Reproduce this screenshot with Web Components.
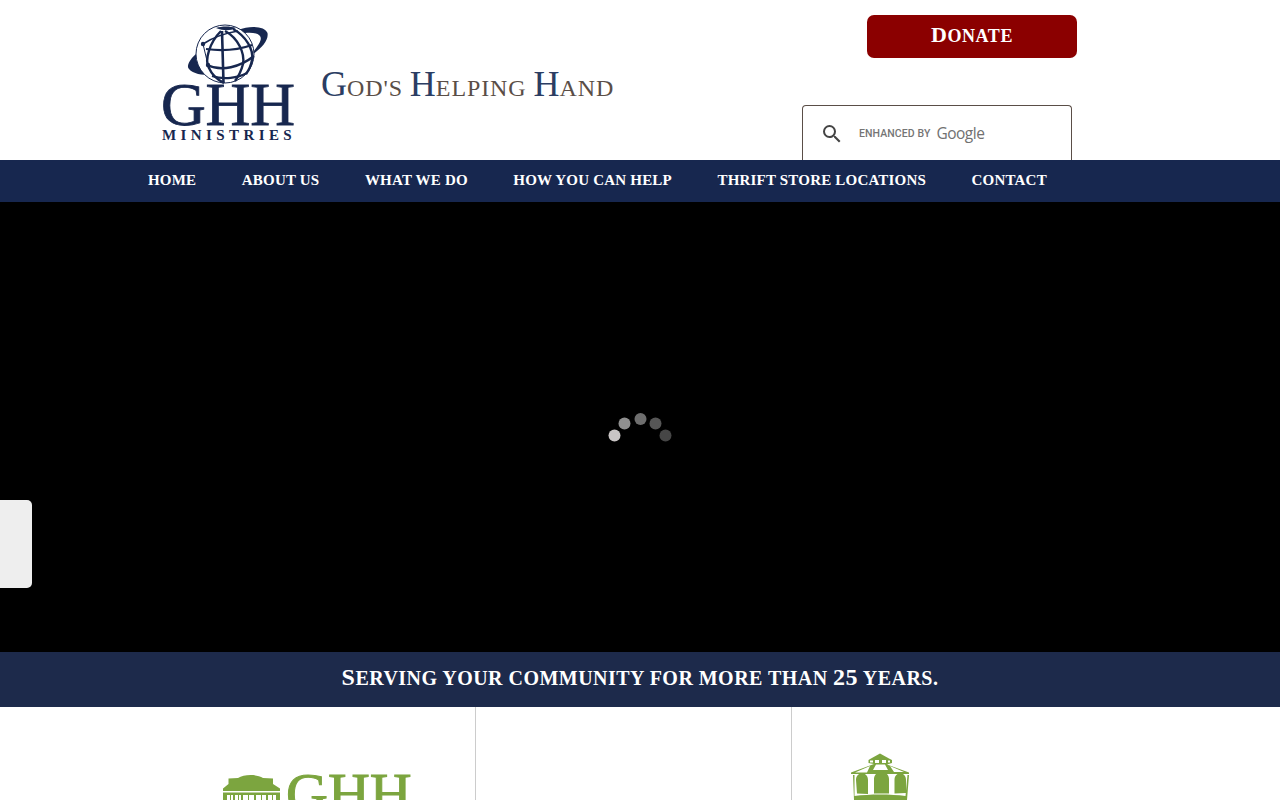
<!DOCTYPE html>
<html lang="en">
<head>
<meta charset="utf-8">
<title>GHH Ministries</title>
<style>
html,body{margin:0;padding:0;height:800px;overflow:hidden;background:#fff;font-family:"Liberation Serif",serif}
</style>
</head>
<body>
<ghh-header></ghh-header>
<ghh-nav>
  <ghh-link>Home</ghh-link><ghh-link>About Us</ghh-link><ghh-link>What We Do</ghh-link><ghh-link>How You Can Help</ghh-link><ghh-link>Thrift Store Locations</ghh-link><ghh-link>Contact</ghh-link>
</ghh-nav>
<ghh-hero></ghh-hero>
<ghh-banner></ghh-banner>
<ghh-columns></ghh-columns>
<ghh-side-tab></ghh-side-tab>
<script>
function def(name, css, html){
  customElements.define(name, class extends HTMLElement{
    constructor(){super();this.attachShadow({mode:'open'}).innerHTML='<style>'+css+'</style>'+html;}
  });
}
def('ghh-logo',`
:host{display:flex;flex-direction:column;width:136px;color:#17274f;font-family:"Liberation Serif",serif}
svg{display:block;width:85px;height:60px;margin-left:24px}
.g{font-size:62px;line-height:40px;height:42px;-webkit-text-stroke:.8px #17274f;white-space:nowrap;letter-spacing:-.2px}
.m{font-size:15px;font-weight:700;line-height:16px;letter-spacing:4.4px;margin-top:1px;white-space:nowrap;padding-left:1px}
`,`<svg viewBox="185 24 85 60" aria-hidden="true">
<g fill="#17274f"><path d="M238 30C250 25 265 26 267.500 33C269 41 260 50 250 56C257 47 263 40 260 36C257 32 247 32 241 34Z"/>
<path d="M196 54C190 59 186 66 189 69C193 74 202 75 211 75C202 71 196 66 196 54Z"/></g>
<circle cx="225" cy="54" r="29" fill="#fff" stroke="#17274f" stroke-width="1"/>
<g fill="none" stroke="#17274f" stroke-width="2.400">
<path d="M222 31L223.500 83" stroke-width="2.600"/>
<path d="M221 31C210 42 204 60 209 68C212 75 218 80 224 83"/>
<path d="M225 31C238 38 245 53 243 64C241 72 238 77 235 81"/>
<path d="M233 29C246 36 254 50 252 60C251 66 249 70 246 74"/>
<path d="M206 49C220 51 238 50 252 45" stroke-width="2.200"/>
<path d="M207 65C222 72 240 67 254 56" stroke-width="2.400"/>
<path d="M212 76C224 80 238 78 247 73" stroke-width="2.200"/>
<path d="M203 44C212 38 226 33 238 31" stroke-width="1.600"/>
<path d="M203 44L208 65" stroke-width="1"/>
</g>
<path d="M216 28C224 31 230 31 236 28C230 26 222 26 216 28Z" fill="#17274f"/>
<circle cx="203" cy="44" r="2.200" fill="#17274f"/><circle cx="208" cy="65" r="2.200" fill="#17274f"/>
</svg>
<div class="g">GHH</div><div class="m">MINISTRIES</div>`);
def('ghh-title',`
:host{display:block;font-family:"Liberation Serif",serif;font-size:24px;line-height:36px;color:#5a4e47;letter-spacing:.9px;white-space:nowrap}
span{color:#2b3d63;font-size:36px;letter-spacing:0}
`,`<span>G</span>OD'S <span>H</span>ELPING <span>H</span>AND`);
def('ghh-donate',`
:host{display:flex;align-items:baseline;justify-content:center;width:210px;height:43px;background:#8b0000;border-radius:7px;color:#fff;font:700 18px/40px "Liberation Serif",serif;letter-spacing:.6px;box-sizing:border-box}
span{font-size:22px}
`,`<span>D</span>ONATE`);
def('ghh-search',`
:host{display:flex;align-items:center;box-sizing:border-box;width:270px;height:55px;border:1px solid #5a4e47;border-bottom:0;border-radius:4px 4px 0 0;background:#fff;padding:1px 0 0 17px}
svg{width:24px;height:24px;display:block;flex:none}
.e{font:500 10.500px/1 Roboto,sans-serif;color:#757575;margin-left:15px;white-space:nowrap;letter-spacing:.1px;padding-top:2px}
.g{font:500 15.500px/1 "Open Sans",sans-serif;color:#717171;margin-left:6px;letter-spacing:-.5px}
`,`<svg viewBox="0 0 24 24"><path fill="#444" d="M15.500 14h-.79l-.28-.27A6.470 6.470 0 0 0 16 9.500 6.500 6.500 0 1 0 9.500 16c1.610 0 3.090-.59 4.230-1.570l.27.28v.79l5 4.990L20.490 19l-4.990-5zm-6 0C7.010 14 5 11.990 5 9.500S7.010 5 9.500 5 14 7.010 14 9.500 11.990 14 9.500 14z"/></svg><span class="e">ENHANCED BY</span><span class="g">Google</span>`);
def('ghh-header',`
:host{display:flex;box-sizing:border-box;height:160px;padding:24px 203px 0 161px;background:#fff}
ghh-title{margin:42px 0 0 24px}
.r{margin-left:auto;margin-top:-9px;display:flex;flex-direction:column;align-items:flex-end}
ghh-search{margin:47px 5px 0 0}
`,`<ghh-logo></ghh-logo><ghh-title></ghh-title><div class="r"><ghh-donate></ghh-donate><ghh-search></ghh-search></div>`);
def('ghh-nav',`
:host{display:flex;box-sizing:border-box;height:42px;background:#17274f;padding-left:148px;gap:45.500px;align-items:center}
`,`<slot></slot>`);
def('ghh-link',`
:host{display:block;color:#fff;font:700 15px/1 "Liberation Serif",serif;text-transform:uppercase;white-space:nowrap;letter-spacing:.2px;padding-bottom:1px}
`,`<slot></slot>`);
def('ghh-spinner',`
:host{display:block;width:80px;height:45px}
svg{display:block;width:80px;height:45px}
`,`<svg viewBox="600 405 80 45"><circle cx="614.500" cy="435.500" r="6" fill="#c9c5c5"/><circle cx="624.500" cy="423.500" r="6" fill="#8f8f8f"/><circle cx="640.500" cy="419" r="6" fill="#6e6e6e"/><circle cx="655.500" cy="423.500" r="6" fill="#565656"/><circle cx="665.500" cy="435.500" r="6" fill="#464646"/></svg>`);
def('ghh-hero',`
:host{display:flex;justify-content:center;box-sizing:border-box;height:450px;background:#000;padding-top:203px}
`,`<ghh-spinner></ghh-spinner>`);
def('ghh-banner',`
:host{display:flex;justify-content:center;align-items:baseline;box-sizing:border-box;height:55px;background:#1d2a4b;color:#fff;font:700 20px/50px "Liberation Serif",serif;letter-spacing:.47px;white-space:pre}
span{font-size:24px}
`,`<span>S</span>ERVING YOUR COMMUNITY FOR MORE THAN <span>25</span> YEARS.`);
def('ghh-columns',`
:host{display:grid;grid-template-columns:476px 316px 1fr;height:93px;overflow:hidden;background:#fff}
.c{box-sizing:border-box;height:93px;overflow:hidden}
.a{border-right:1px solid #ccc;display:flex;padding:67px 0 0 223px;gap:6px}
.b{border-right:1px solid #ccc}
.d{padding:46px 0 0 58px}
svg{display:block;flex:none}
.t{font:400 58px/38px "Liberation Serif",serif;color:#7ca53f;-webkit-text-stroke:1px #7ca53f;height:38px;margin-top:1px;white-space:nowrap}
`,`<div class="c a"><svg width="57" height="26" viewBox="223 774 57 26" aria-hidden="true">
<path fill="#7ca53f" d="M238 778C244 774 257 774 263 778L273 778.500V784L280 788.500V791H223V788.500L228.500 784V778.500Z"/>
<path fill="#7ca53f" d="M223 792.500H280V800H223Z"/>
<path fill="#fff" d="M227 795H233V800H227ZM235 795H241V800H235ZM243 795H254V800H243ZM256 795H266V800H256ZM268 795H276V800H268Z"/>
<path fill="#7ca53f" d="M230 795h1v5h-1zM238 795h1v5h-1zM248 795h1v5h-1zM261 795h1v5h-1zM272 795h1v5h-1z"/>
</svg><div class="t">GHH</div></div>
<div class="c b"></div>
<div class="c d"><svg width="60" height="47" viewBox="849 753 60 47" aria-hidden="true">
<path fill="#7ca53f" d="M879 753.500L888 758.500L891 760V763L886 764.500L908 772.500V774H850V772.500L873 764L867.500 763V760L870 758.500Z"/>
<path fill="#fff" d="M874 760H878V763H874ZM881 760H885V763H881ZM869 760.500H872V762.500H869ZM887 760.500H889V762.500H887ZM875 764.500H884L887 770H872ZM869 766L854 772.500H866ZM889 766L903 772H893Z"/>
<path fill="#7ca53f" d="M855 780C855 771 867 771 867 780V794L856 793.500ZM873 779C873 769.500 888 769.500 888 779V793.500H873ZM893.500 793.500V780C893.500 771 905 771 905 780V793Z"/>
<path fill="#7ca53f" d="M852 775H853.500V796C868 794 890 794 904.500 796L906.500 775H908L906 800H853Z"/>
</svg></div>`);
def('ghh-side-tab',`
:host{position:absolute;left:0;top:500px;width:32px;height:88px;background:#eee;border-radius:0 5px 5px 0}
`,``);
</script>
</body>
</html>
